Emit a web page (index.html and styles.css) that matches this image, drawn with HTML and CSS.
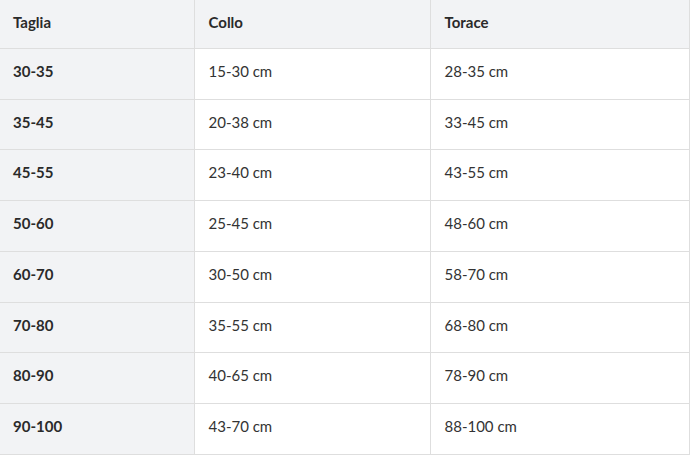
FILE: index.html
```html
<!DOCTYPE html>
<html lang="it">
<head>
<meta charset="utf-8">
<title>Taglie</title>
<link rel="stylesheet" href="styles.css">
</head>
<body>
<table class="size-table">
  <colgroup>
    <col class="c1"><col class="c2"><col class="c3">
  </colgroup>
  <thead>
    <tr><th>Taglia</th><th>Collo</th><th>Torace</th></tr>
  </thead>
  <tbody>
    <tr><th>30-35</th><td>15-30 cm</td><td>28-35 cm</td></tr>
    <tr><th>35-45</th><td>20-38 cm</td><td>33-45 cm</td></tr>
    <tr><th>45-55</th><td>23-40 cm</td><td>43-55 cm</td></tr>
    <tr><th>50-60</th><td>25-45 cm</td><td>48-60 cm</td></tr>
    <tr><th>60-70</th><td>30-50 cm</td><td>58-70 cm</td></tr>
    <tr><th>70-80</th><td>35-55 cm</td><td>68-80 cm</td></tr>
    <tr><th>80-90</th><td>40-65 cm</td><td>78-90 cm</td></tr>
    <tr><th>90-100</th><td>43-70 cm</td><td>88-100 cm</td></tr>
  </tbody>
</table>
</body>
</html>
```
FILE: styles.css
```css
html, body {
  margin: 0;
  padding: 0;
  background: #ffffff;
}
body {
  font-family: "Lato", "Noto Sans", sans-serif;
  font-size: 15px;
  color: #333333;
}
.size-table {
  border-collapse: collapse;
  table-layout: fixed;
  width: 689px;
}
.size-table .c1 { width: 194px; }
.size-table .c2 { width: 236px; }
.size-table .c3 { width: 259px; }
.size-table th,
.size-table td {
  box-sizing: border-box;
  text-align: left;
  padding: 13px 14px 17px 14px;
  line-height: 19.7px;
  border: 1px solid #dedede;
  font-weight: 400;
}
.size-table thead th {
  background: #f2f3f5;
  font-weight: 700;
  padding: 12px 14px 16px 14px;
  line-height: 20px;
  border-top: none;
  color: #2a2a2a;
}
.size-table tbody th {
  background: #f2f3f5;
  font-weight: 700;
  color: #2a2a2a;
}
.size-table tr > :first-child {
  border-left: none;
  padding-left: 13px;
}
```
